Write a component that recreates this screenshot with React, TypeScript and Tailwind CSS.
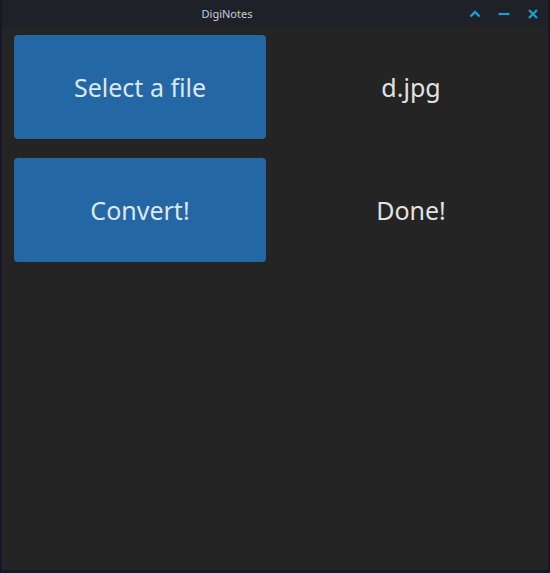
import React from "react";

export default function App() {
  return (
    <div
      className="w-[550px] h-[573px] bg-[#17172a] pl-[2px] pr-[2px] pb-[3px] flex flex-col"
      style={{ fontFamily: '"Noto Sans", sans-serif' }}
    >
      <div className="h-[27px] bg-[#1f2129] flex items-center relative shrink-0">
        <div className="absolute left-0 w-[450px] text-center text-[11px] text-[#c8ccd2] top-[6px]">DigiNotes</div>
        <div className="ml-auto flex items-center gap-[15px] pr-[8px] text-[#1e9fd2]">
          <svg width="14" height="14" viewBox="0 0 14 14"><path d="M2.5 9.5 L7 5 L11.5 9.5" stroke="currentColor" strokeWidth="2.4" fill="none" /></svg>
          <svg width="14" height="14" viewBox="0 0 14 14"><path d="M1.5 7 H12.5" stroke="currentColor" strokeWidth="2.2" fill="none" /></svg>
          <svg width="14" height="14" viewBox="0 0 14 14"><path d="M3 3 L11 11 M11 3 L3 11" stroke="currentColor" strokeWidth="2.2" fill="none" /></svg>
        </div>
      </div>
      <div className="flex-1 bg-[#242424] pt-[8px] pl-[12px] flex flex-col gap-[19px]">
        <div className="flex items-center">
          <button className="w-[252px] h-[104px] pt-[2px] rounded-[4px] bg-[#2368a4] text-[#dce7f2] text-[25px]">Select a file</button>
          <div className="flex-1 pl-[8px] pt-[2px] text-center text-[25px] text-[#e2e2e2]">d.jpg</div>
        </div>
        <div className="flex items-center">
          <button className="w-[252px] h-[104px] pt-[2px] rounded-[4px] bg-[#2368a4] text-[#dce7f2] text-[25px]">Convert!</button>
          <div className="flex-1 pl-[8px] pt-[2px] text-center text-[25px] text-[#e2e2e2]">Done!</div>
        </div>
      </div>
    </div>
  );
}
